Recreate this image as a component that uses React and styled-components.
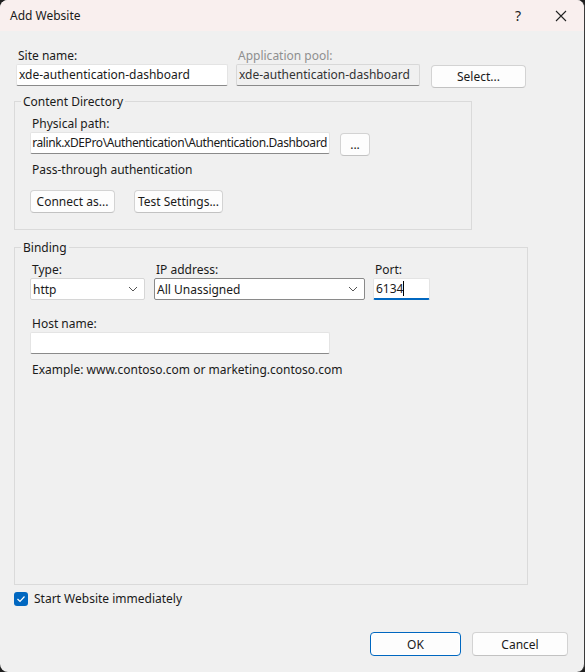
import React from "react";
import styled, { createGlobalStyle } from "styled-components";

const Global = createGlobalStyle`
  html, body { margin: 0; padding: 0; background: #1f1f1f; }
  body { font-family: "Noto Sans", "Open Sans", sans-serif; font-size: 12px; color: #1a1a1a; }
  * { box-sizing: border-box; }
`;

const Window = styled.div`
  width: 585px;
  height: 672px;
  background: #f0f0f0;
  border-radius: 8px;
  border-right: 1px solid #3a3a3a;
  overflow: hidden;
  display: flex;
  flex-direction: column;
`;

const TitleBar = styled.div`
  height: 31px;
  background: #f9efee;
  display: flex;
  align-items: center;
  padding-left: 10px;
`;

const Title = styled.div`
  flex: 1;
  font-size: 12px;
`;

const TitleBtn = styled.div`
  width: 46px;
  height: 31px;
  display: flex;
  align-items: center;
  justify-content: center;
  font-size: 14px;
  color: #222;
`;

const Body = styled.div`
  flex: 1;
  display: flex;
  flex-direction: column;
  padding: 16px 16px 0 14px;
`;

const TopRow = styled.div`
  display: flex;
  align-items: flex-end;
  padding-left: 2px;
`;

const Field = styled.div`
  display: flex;
  flex-direction: column;
  width: ${(p) => p.w}px;
  margin-right: ${(p) => p.mr || 0}px;
  margin-top: ${(p) => p.mt || 0}px;
`;

const Label = styled.div`
  height: 17px;
  line-height: 17px;
  padding-left: 2px;
  color: ${(p) => (p.disabled ? "#8f8f8f" : "#1a1a1a")};
`;

const Input = styled.div`
  height: 22px;
  line-height: 20px;
  padding: 0 2px;
  display: flex;
  justify-content: ${(p) => (p.end ? "flex-end" : "flex-start")};
  letter-spacing: ${(p) => (p.tight ? "-0.4px" : "normal")};
  background: ${(p) => (p.disabled ? "#f0f0f0" : "#fff")};
  border: 1px solid ${(p) => (p.disabled ? "#d8d8d8" : "#e4e4e4")};
  border-bottom: ${(p) => (p.focused ? "2px solid #0067c0" : "1px solid #8a8a8a")};
  border-radius: 2px;
  white-space: nowrap;
  overflow: hidden;
  color: ${(p) => (p.disabled ? "#333" : "#1a1a1a")};
`;

const Caret = styled.span`
  display: inline-block;
  width: 1px;
  height: 15px;
  background: #000;
  align-self: center;
  margin-top: -1px;
`;

const Button = styled.button`
  font: inherit;
  color: #1a1a1a;
  height: ${(p) => p.h || 23}px;
  width: ${(p) => p.w}px;
  background: #fdfdfd;
  border: 1px solid ${(p) => (p.primary ? "#0067c0" : "#d3d3d3")};
  border-bottom-color: ${(p) => (p.primary ? "#0067c0" : "#c2c2c2")};
  border-radius: 4px;
  padding: 0;
  box-shadow: ${(p) => (p.primary ? "inset 0 0 0 1px #fff" : "none")};
`;

const Group = styled.fieldset`
  margin: ${(p) => p.mt || 0}px 0 0 0;
  min-width: 0;
  width: ${(p) => p.w}px;
  height: ${(p) => p.h}px;
  border: 1px solid #dadada;
  border-radius: 0;
  padding: 6px 16px 0 15px;
`;

const Legend = styled.legend`
  padding: 0 2px;
  margin-left: -9px;
  line-height: 15px;
`;

const Row = styled.div`
  display: flex;
  align-items: flex-start;
  gap: ${(p) => p.gap || 0}px;
  margin-top: ${(p) => p.mt || 0}px;
`;

const Text = styled.div`
  padding-left: 2px;
  margin-top: ${(p) => p.mt || 0}px;
  line-height: 17px;
`;

const Select = styled.div`
  height: 22px;
  width: ${(p) => p.w}px;
  background: #fff;
  border: 1px solid ${(p) => (p.dark ? "#8a8a8a" : "#d6d6d6")};
  border-radius: 2px;
  display: flex;
  align-items: center;
  padding: 0 6px 0 2px;
  justify-content: space-between;
`;

const Chevron = () => (
  <svg width="10" height="6" viewBox="0 0 10 6">
    <path d="M1 1 L5 5 L9 1" fill="none" stroke="#555" strokeWidth="1" />
  </svg>
);

const CheckRow = styled.div`
  display: flex;
  align-items: center;
  gap: 6px;
  margin-top: 5px;
`;

const Box = styled.div`
  width: 14px;
  height: 14px;
  border-radius: 3px;
  background: #0067c0;
  display: flex;
  align-items: center;
  justify-content: center;
`;

const Footer = styled.div`
  display: flex;
  justify-content: flex-end;
  gap: 11px;
  margin-top: auto;
  padding: 0 0 16px 0;
`;

export default function App() {
  return (
    <>
      <Global />
      <Window>
        <TitleBar>
          <Title>Add Website</Title>
          <TitleBtn style={{ marginRight: -3 }}>?</TitleBtn>
          <TitleBtn>
            <svg width="12" height="12" viewBox="0 0 12 12">
              <path d="M1 1 L11 11 M11 1 L1 11" stroke="#222" strokeWidth="1.1" />
            </svg>
          </TitleBtn>
        </TitleBar>
        <Body>
          <TopRow>
            <Field w={212} mr={8}>
              <Label>Site name:</Label>
              <Input>xde-authentication-dashboard</Input>
            </Field>
            <Field w={184} mr={11}>
              <Label disabled>Application pool:</Label>
              <Input disabled>xde-authentication-dashboard</Input>
            </Field>
            <Button w={95} style={{ marginBottom: -2 }}>Select...</Button>
          </TopRow>

          <Group w={458} h={136} mt={8}>
            <Legend>Content Directory</Legend>
            <Label>Physical path:</Label>
            <Row gap={10}>
              <Field w={300}>
                <Input end tight>ralink.xDEPro\Authentication\Authentication.Dashboard</Input>
              </Field>
              <Button w={30} style={{ marginTop: 1 }}>...</Button>
            </Row>
            <Text mt={5}>Pass-through authentication</Text>
            <Row gap={19} mt={12}>
              <Button w={85}>Connect as...</Button>
              <Button w={89}>Test Settings...</Button>
            </Row>
          </Group>

          <Group w={514} h={345} mt={10}>
            <Legend>Binding</Legend>
            <Row>
              <Field w={115} mr={9}>
                <Label>Type:</Label>
                <Select w={115}>
                  <span>http</span>
                  <Chevron />
                </Select>
              </Field>
              <Field w={211} mr={8}>
                <Label>IP address:</Label>
                <Select w={211} dark>
                  <span>All Unassigned</span>
                  <Chevron />
                </Select>
              </Field>
              <Field w={57}>
                <Label>Port:</Label>
                <Input focused>
                  6134<Caret />
                </Input>
              </Field>
            </Row>
            <Field w={300} mt={15}>
              <Label>Host name:</Label>
              <Input />
            </Field>
            <Text mt={7}>Example: www.contoso.com or marketing.contoso.com</Text>
          </Group>

          <CheckRow>
            <Box>
              <svg width="10" height="8" viewBox="0 0 10 8">
                <path d="M1.5 4 L4 6.5 L8.5 1.5" fill="none" stroke="#fff" strokeWidth="1.2" />
              </svg>
            </Box>
            <span>Start Website immediately</span>
          </CheckRow>

          <Footer>
            <Button w={91} h={24} primary>OK</Button>
            <Button w={96} h={24}>Cancel</Button>
          </Footer>
        </Body>
      </Window>
    </>
  );
}
